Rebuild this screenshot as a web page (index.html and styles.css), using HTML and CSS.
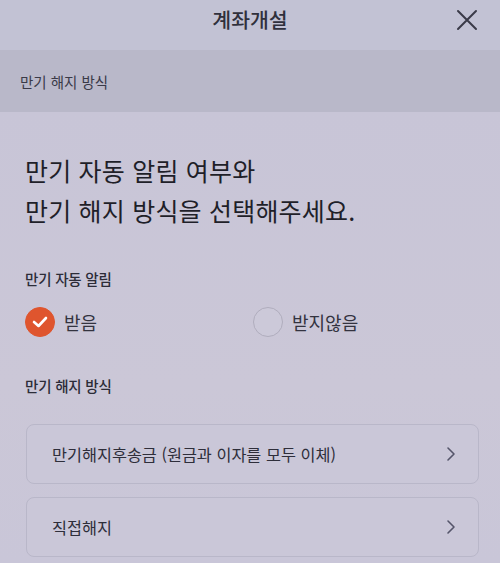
FILE: index.html
```html
<!DOCTYPE html>
<html lang="ko">
<head>
<meta charset="utf-8">
<link rel="stylesheet" href="styles.css">
</head>
<body>
<div class="page">
  <header class="topbar">
    <h1 class="title">계좌개설</h1>
    <button class="close" aria-label="닫기">
      <svg width="22" height="22" viewBox="0 0 22 22"><path d="M2 2 L20 20 M20 2 L2 20" stroke="#3a3a48" stroke-width="2" fill="none" stroke-linecap="round"/></svg>
    </button>
  </header>
  <div class="band">만기 해지 방식</div>
  <main class="content">
    <h2 class="heading">만기 자동 알림 여부와<br>만기 해지 방식을 선택해주세요.</h2>
    <div class="label">만기 자동 알림</div>
    <div class="radios">
      <div class="radio">
        <span class="dot on">
          <svg width="16" height="12" viewBox="0 0 16 12"><path d="M2 6 L6.5 10 L14 2" stroke="#fff" stroke-width="2.6" fill="none" stroke-linecap="round" stroke-linejoin="round"/></svg>
        </span>
        <span class="rtext">받음</span>
      </div>
      <div class="radio">
        <span class="dot"></span>
        <span class="rtext">받지않음</span>
      </div>
    </div>
    <div class="label label2">만기 해지 방식</div>
    <div class="cards">
      <div class="card">
        <span>만기해지후송금 (원금과 이자를 모두 이체)</span>
        <svg width="10" height="16" viewBox="0 0 10 16"><path d="M2 2 L8 8 L2 14" stroke="#55556a" stroke-width="1.6" fill="none" stroke-linecap="round" stroke-linejoin="round"/></svg>
      </div>
      <div class="card">
        <span>직접해지</span>
        <svg width="10" height="16" viewBox="0 0 10 16"><path d="M2 2 L8 8 L2 14" stroke="#55556a" stroke-width="1.6" fill="none" stroke-linecap="round" stroke-linejoin="round"/></svg>
      </div>
    </div>
  </main>
</div>
</body>
</html>
```
FILE: styles.css
```css
* { box-sizing: border-box; }
html, body { margin: 0; padding: 0; }
body {
  width: 500px;
  height: 563px;
  overflow: hidden;
  background: #c9c6d7;
  font-family: "Noto Sans CJK KR", "Noto Sans", sans-serif;
  color: #2a2a35;
}
.page { display: flex; flex-direction: column; height: 563px; }
.topbar {
  height: 50px;
  background: #c2c2d4;
  display: flex;
  align-items: center;
  justify-content: center;
  position: relative;
}
.title {
  margin: 0;
  font-size: 20.5px;
  font-weight: 500;
  color: #30303c;
  margin-top: -12px;
}
.close {
  position: absolute;
  right: 22px;
  top: 9px;
  background: none;
  border: 0;
  padding: 0;
  display: flex;
}
.band {
  height: 62px;
  background: #b9b8c9;
  display: flex;
  align-items: center;
  padding-left: 20px;
  padding-bottom: 0;
  font-size: 14.5px;
  color: #3a3a48;
}
.content {
  flex: 1;
  padding: 38px 21px 0 25px;
  background: linear-gradient(180deg, #c8c5d7 0%, #cbc7d7 60%, #c9c6d8 100%);
}
.heading {
  margin: 0;
  font-size: 25px;
  font-weight: 400;
  line-height: 40px;
  color: #1f1f29;
  letter-spacing: 0.2px;
}
.label {
  margin-top: 38px;
  font-size: 14.5px;
  font-weight: 500;
  letter-spacing: -0.2px;
  color: #2c2c38;
}
.label2 { margin-top: 37px; }
.radios {
  display: grid;
  grid-template-columns: 228px 1fr;
  margin-top: 17px;
  height: 32px;
  align-items: center;
}
.radio { display: flex; align-items: center; gap: 9px; }
.dot {
  width: 30px;
  height: 30px;
  border-radius: 50%;
  border: 1.5px solid #b0adbd;
  background: #ccc9d9;
  display: flex;
  align-items: center;
  justify-content: center;
}
.dot.on { background: #df552e; border-color: #df552e; }
.rtext { font-size: 18px; color: #33333f; }
.cards {
  display: flex;
  flex-direction: column;
  gap: 13px;
  margin-top: 28px;
  padding-left: 1px;
}
.card {
  height: 60px;
  border: 1px solid #b9b7c9;
  border-radius: 8px;
  background: #cac7d8;
  display: flex;
  align-items: center;
  justify-content: space-between;
  padding: 0 22px 0 25px;
  font-size: 16.3px;
  color: #2e2e3a;
}
```
